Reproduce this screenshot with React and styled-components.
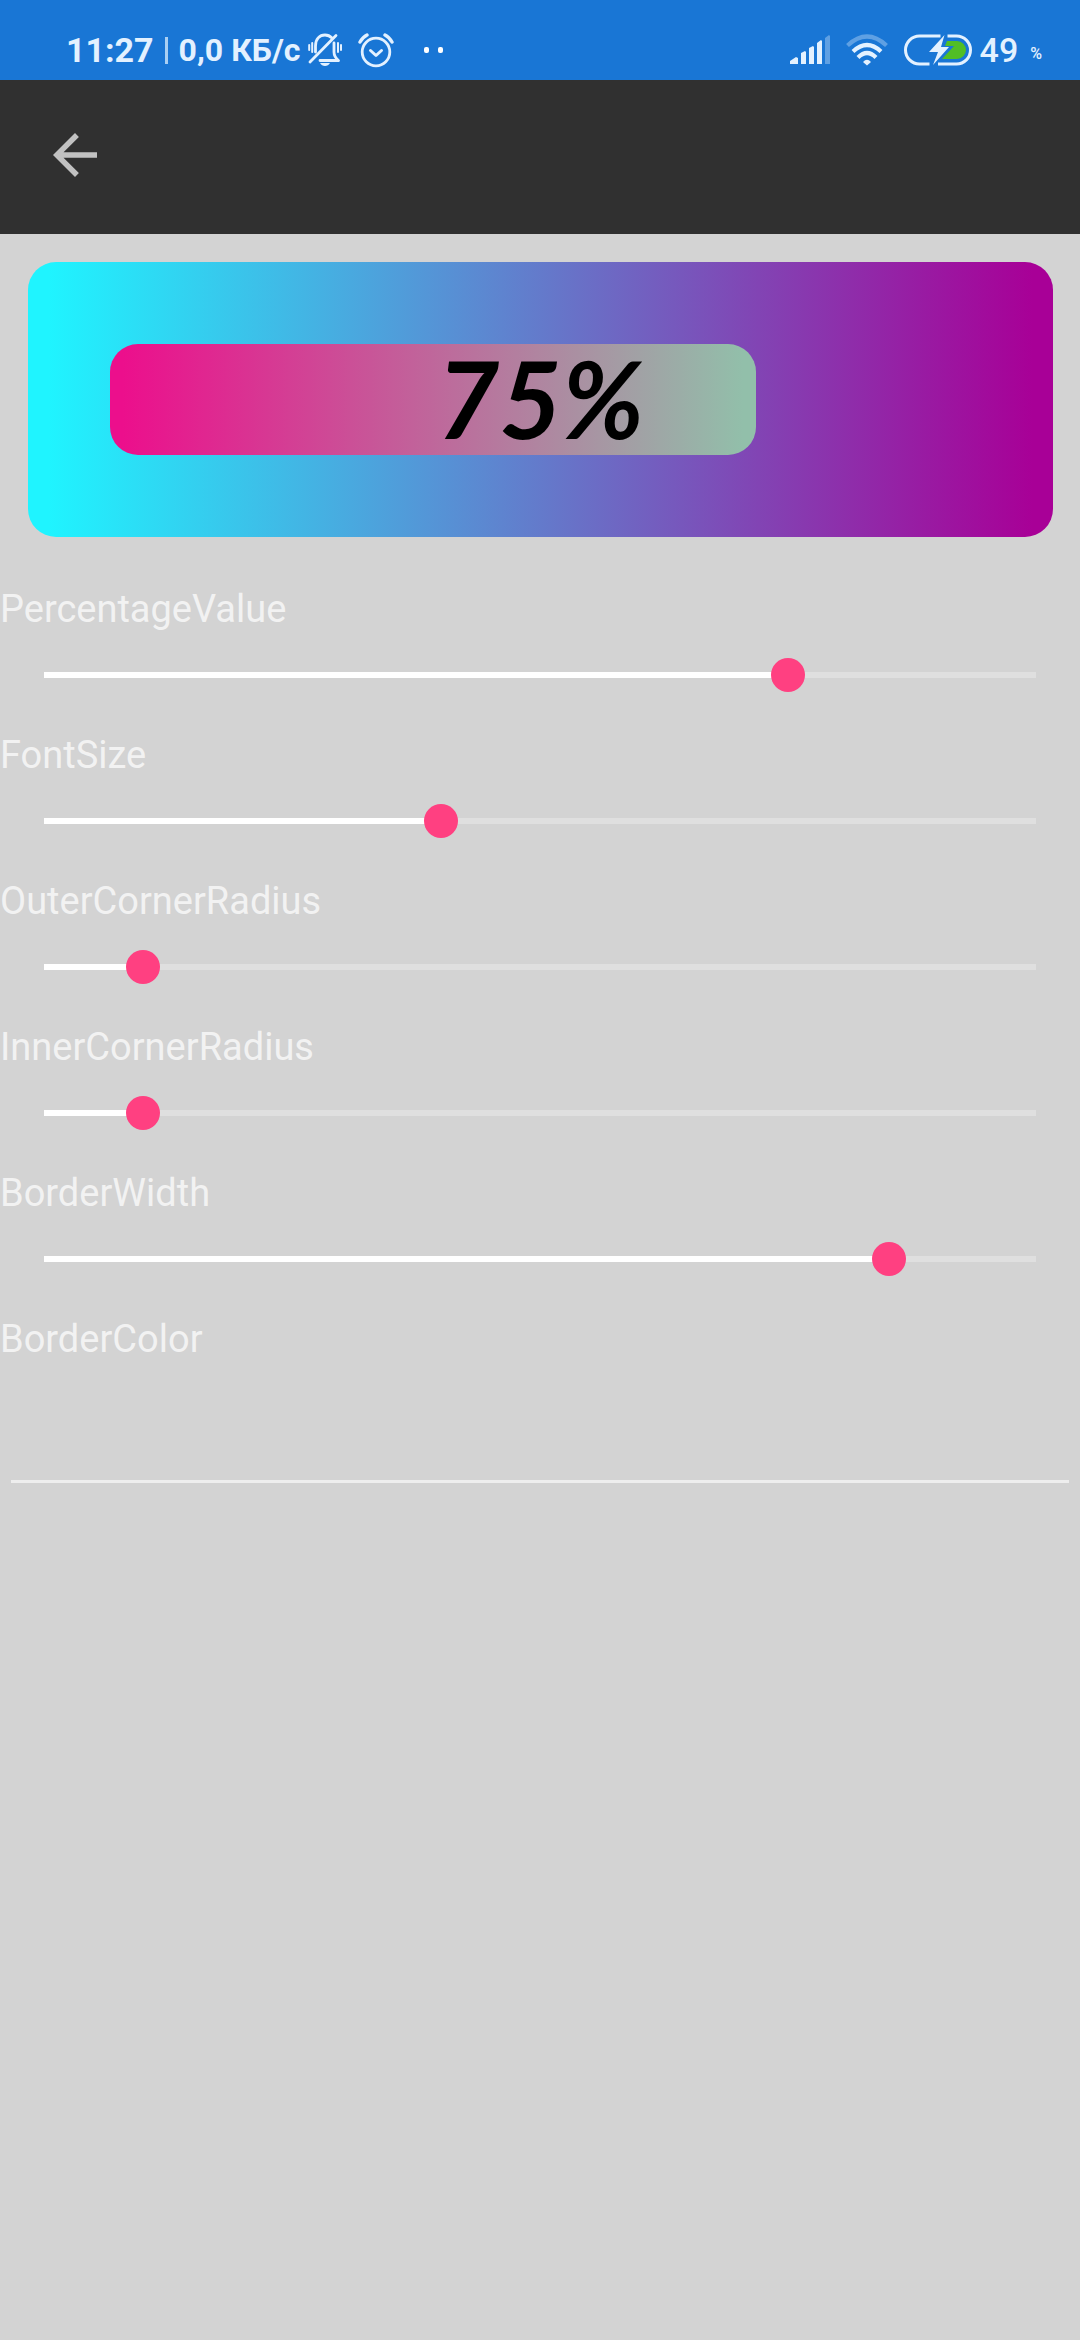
import React, { useState } from "react";
import styled, { createGlobalStyle } from "styled-components";

const GlobalStyle = createGlobalStyle`
  *, *::before, *::after { box-sizing: border-box; }
  body {
    margin: 0;
    background: #d3d3d3;
    font-family: Roboto, "Liberation Sans", sans-serif;
  }
`;

const Screen = styled.div`
  min-height: 100vh;
  background: #d3d3d3;
`;

const StatusBar = styled.header`
  display: flex;
  align-items: center;
  justify-content: space-between;
  height: 80px;
  padding: 20px 38px 0 66px;
  background: #1976d5;
  color: #e3f1ff;
`;

const StatusGroup = styled.div`
  display: flex;
  align-items: center;
  gap: ${(p) => p.$gap}px;
`;

const StatusText = styled.span`
  font-size: ${(p) => p.$size}px;
  font-weight: ${(p) => p.$weight};
  line-height: 40px;
  white-space: nowrap;
`;

const Divider = styled.span`
  width: 3px;
  height: 27px;
  background: #a9cff3;
`;

const Unit = styled.span`
  padding: 8px 0 0 4px;
  font-size: 16px;
  font-weight: 500;
  line-height: 20px;
`;

const Dots = styled.span`
  display: flex;
  gap: 9px;
  padding-left: 14px;

  &::before, &::after {
    content: "";
    width: 5px;
    height: 6px;
    border-radius: 2px;
    background: #fff;
  }
`;

const Toolbar = styled.nav`
  display: flex;
  align-items: center;
  height: 154px;
  padding: 0 42px 4px;
  background: #303030;
`;

const BackButton = styled.button`
  display: flex;
  padding: 0;
  border: 0;
  background: none;
  color: #c1c1c1;
`;

const Frame = styled.section`
  display: flex;
  align-items: center;
  height: 275px;
  margin: 28px 27px 28px 28px;
  padding: 82px;
  border-radius: 28px;
  background: linear-gradient(90deg, #1ff4ff 2%, #a80097 98%);
`;

const Meter = styled.div`
  display: grid;
  align-items: start;
  width: 100%;
  height: 111px;
`;

const Fill = styled.div`
  grid-area: 1 / 1;
  height: 111px;
  border-radius: 28px;
  background: linear-gradient(90deg, #ec0f8c 2%, #92bfaa 98%);
`;

const MeterText = styled.output`
  grid-area: 1 / 1;
  justify-self: center;
  color: #000;
  font-family: Lato, "Open Sans", sans-serif;
  font-size: 108px;
  font-style: italic;
  font-weight: 700;
  line-height: 106px;
`;

const Settings = styled.form`
  display: flex;
  flex-direction: column;
  gap: 14px;
  padding-top: 18px;
`;

const Field = styled.div`
  display: flex;
  flex-direction: column;
`;

const Label = styled.label`
  color: #f2f2f2;
  font-size: 38px;
  line-height: 52px;
`;

const Slider = styled.input`
  appearance: none;
  height: 80px;
  margin: 0 27px;
  background:
    linear-gradient(#fff, #fff) 17px center / calc((100% - 34px) * var(--ratio)) 6px no-repeat,
    linear-gradient(#dfdfdf, #dfdfdf) 17px center / calc(100% - 34px) 6px no-repeat;

  &::-webkit-slider-thumb {
    appearance: none;
    width: 34px;
    height: 34px;
    border-radius: 50%;
    background: #ff4081;
  }
`;

const ColorInput = styled.input`
  height: 118px;
  margin: 0 11px;
  padding: 0;
  border: 0;
  border-bottom: 3px solid #eeeeee;
  background: none;
  color: #f2f2f2;
  font: 38px Roboto, sans-serif;
  outline: none;
`;

const MutedBell = () => (
  <svg width="34" height="34" viewBox="0 0 34 34" fill="none" stroke="currentColor" strokeWidth="2.8" strokeLinecap="round" strokeLinejoin="round">
    <path d="M7.500 19V13C7.500 6 11.500 2 17 2c3 0 5 1 7 3M26 10v9c0 3 1.500 6 4.500 8.500H12" />
    <path d="M28 2.500 2 29" />
    <path d="M1.200 12v5M4.200 10v9M30 10v9M33 12v5" strokeWidth="2" />
    <path d="M12 30h10c-2 4-8 4-10 0z" fill="currentColor" stroke="none" />
  </svg>
);

const AlarmIcon = () => (
  <svg width="36" height="36" viewBox="0 0 36 36" fill="none" stroke="currentColor" strokeLinecap="round" strokeLinejoin="round">
    <circle cx="18" cy="20" r="13.800" strokeWidth="2.800" />
    <path d="m12.500 18.500 5.500 5 5.500-5" strokeWidth="3" />
    <path d="M2 10q3-5 7-7M34 10q-3-5-7-7" strokeWidth="3.400" />
  </svg>
);

const SignalIcon = () => (
  <svg width="40" height="30" viewBox="0 0 40 30" fill="currentColor">
    <path d="M0 29v-3l6-4 2 1v6zM11 29V18l4-2 1 1v12zM19 29V13l4-2 1 1v17zM27 29V8l4-3 1 1v23z" />
    <path d="M35 29V3l4-3 1 1v28z" opacity=".35" />
  </svg>
);

const WifiIcon = () => (
  <svg width="42" height="32" viewBox="0 0 42 32" fill="none" stroke="currentColor" strokeWidth="4.200">
    <path d="M1.500 11.500Q21-6.500 40.500 11.500" opacity=".35" />
    <path d="M7 17.500Q21 4.500 35 17.500" />
    <path d="M12 23.500Q21 14.500 30 23.500" />
    <path d="M17 28q4-4.500 8 0l-4 3.500z" fill="currentColor" stroke="none" />
  </svg>
);

const BatteryIcon = () => (
  <svg width="68" height="32" viewBox="0 0 68 32" fill="none">
    <path d="M36.500 2H15.500a14 14 0 0 0 0 28h10M43.500 2H52.500a14 14 0 0 1 0 28H34" stroke="currentColor" strokeWidth="3" />
    <path d="M43 7h10a9 9 0 0 1 0 18H38l12-13h-9z" fill="#51be25" />
    <path d="M40.500 1 25 18h9l-5 13 16-18h-8z" fill="currentColor" />
  </svg>
);

const BackIcon = () => (
  <svg width="66" height="66" viewBox="0 0 24 24" fill="currentColor" aria-hidden="true">
    <path d="M20 11H7.830l5.590-5.590L12 4l-8 8 8 8 1.410-1.410L7.830 13H20v-2z" />
  </svg>
);

const sliders = [
  { id: "PercentageValue", min: 0, max: 100, value: 75 },
  { id: "FontSize", min: 0, max: 100, value: 40 },
  { id: "OuterCornerRadius", min: 0, max: 100, value: 10 },
  { id: "InnerCornerRadius", min: 0, max: 100, value: 10 },
  { id: "BorderWidth", min: 0, max: 27, value: 23 },
];

export default function App() {
  const [values, setValues] = useState(
    Object.fromEntries(sliders.map((s) => [s.id, s.value]))
  );
  const percent = values.PercentageValue;

  return (
    <Screen>
      <GlobalStyle />
      <StatusBar>
        <StatusGroup $gap={8}>
          <StatusGroup $gap={11}>
            <StatusText $size={34} $weight={700}>11:27</StatusText>
            <Divider />
            <StatusText $size={32} $weight={700}>0,0 КБ/с</StatusText>
          </StatusGroup>
          <StatusGroup $gap={16}>
            <MutedBell />
            <AlarmIcon />
            <Dots />
          </StatusGroup>
        </StatusGroup>
        <StatusGroup $gap={8}>
          <StatusGroup $gap={16}>
            <SignalIcon />
            <WifiIcon />
            <BatteryIcon />
          </StatusGroup>
          <StatusText $size={34} $weight={500}>49</StatusText>
          <Unit>%</Unit>
        </StatusGroup>
      </StatusBar>
      <Toolbar>
        <BackButton type="button" aria-label="Back">
          <BackIcon />
        </BackButton>
      </Toolbar>
      <main>
        <Frame>
          <Meter>
            <Fill style={{ width: `${percent}%` }} />
            <MeterText htmlFor="PercentageValue">{percent}%</MeterText>
          </Meter>
        </Frame>
        <Settings>
          {sliders.map(({ id, min, max }) => (
            <Field key={id}>
              <Label htmlFor={id}>{id}</Label>
              <Slider
                id={id}
                type="range"
                min={min}
                max={max}
                value={values[id]}
                style={{ "--ratio": (values[id] - min) / (max - min) }}
                onChange={(e) => setValues({ ...values, [id]: Number(e.target.value) })}
              />
            </Field>
          ))}
          <Field>
            <Label htmlFor="BorderColor">BorderColor</Label>
            <ColorInput id="BorderColor" type="text" />
          </Field>
        </Settings>
      </main>
    </Screen>
  );
}
